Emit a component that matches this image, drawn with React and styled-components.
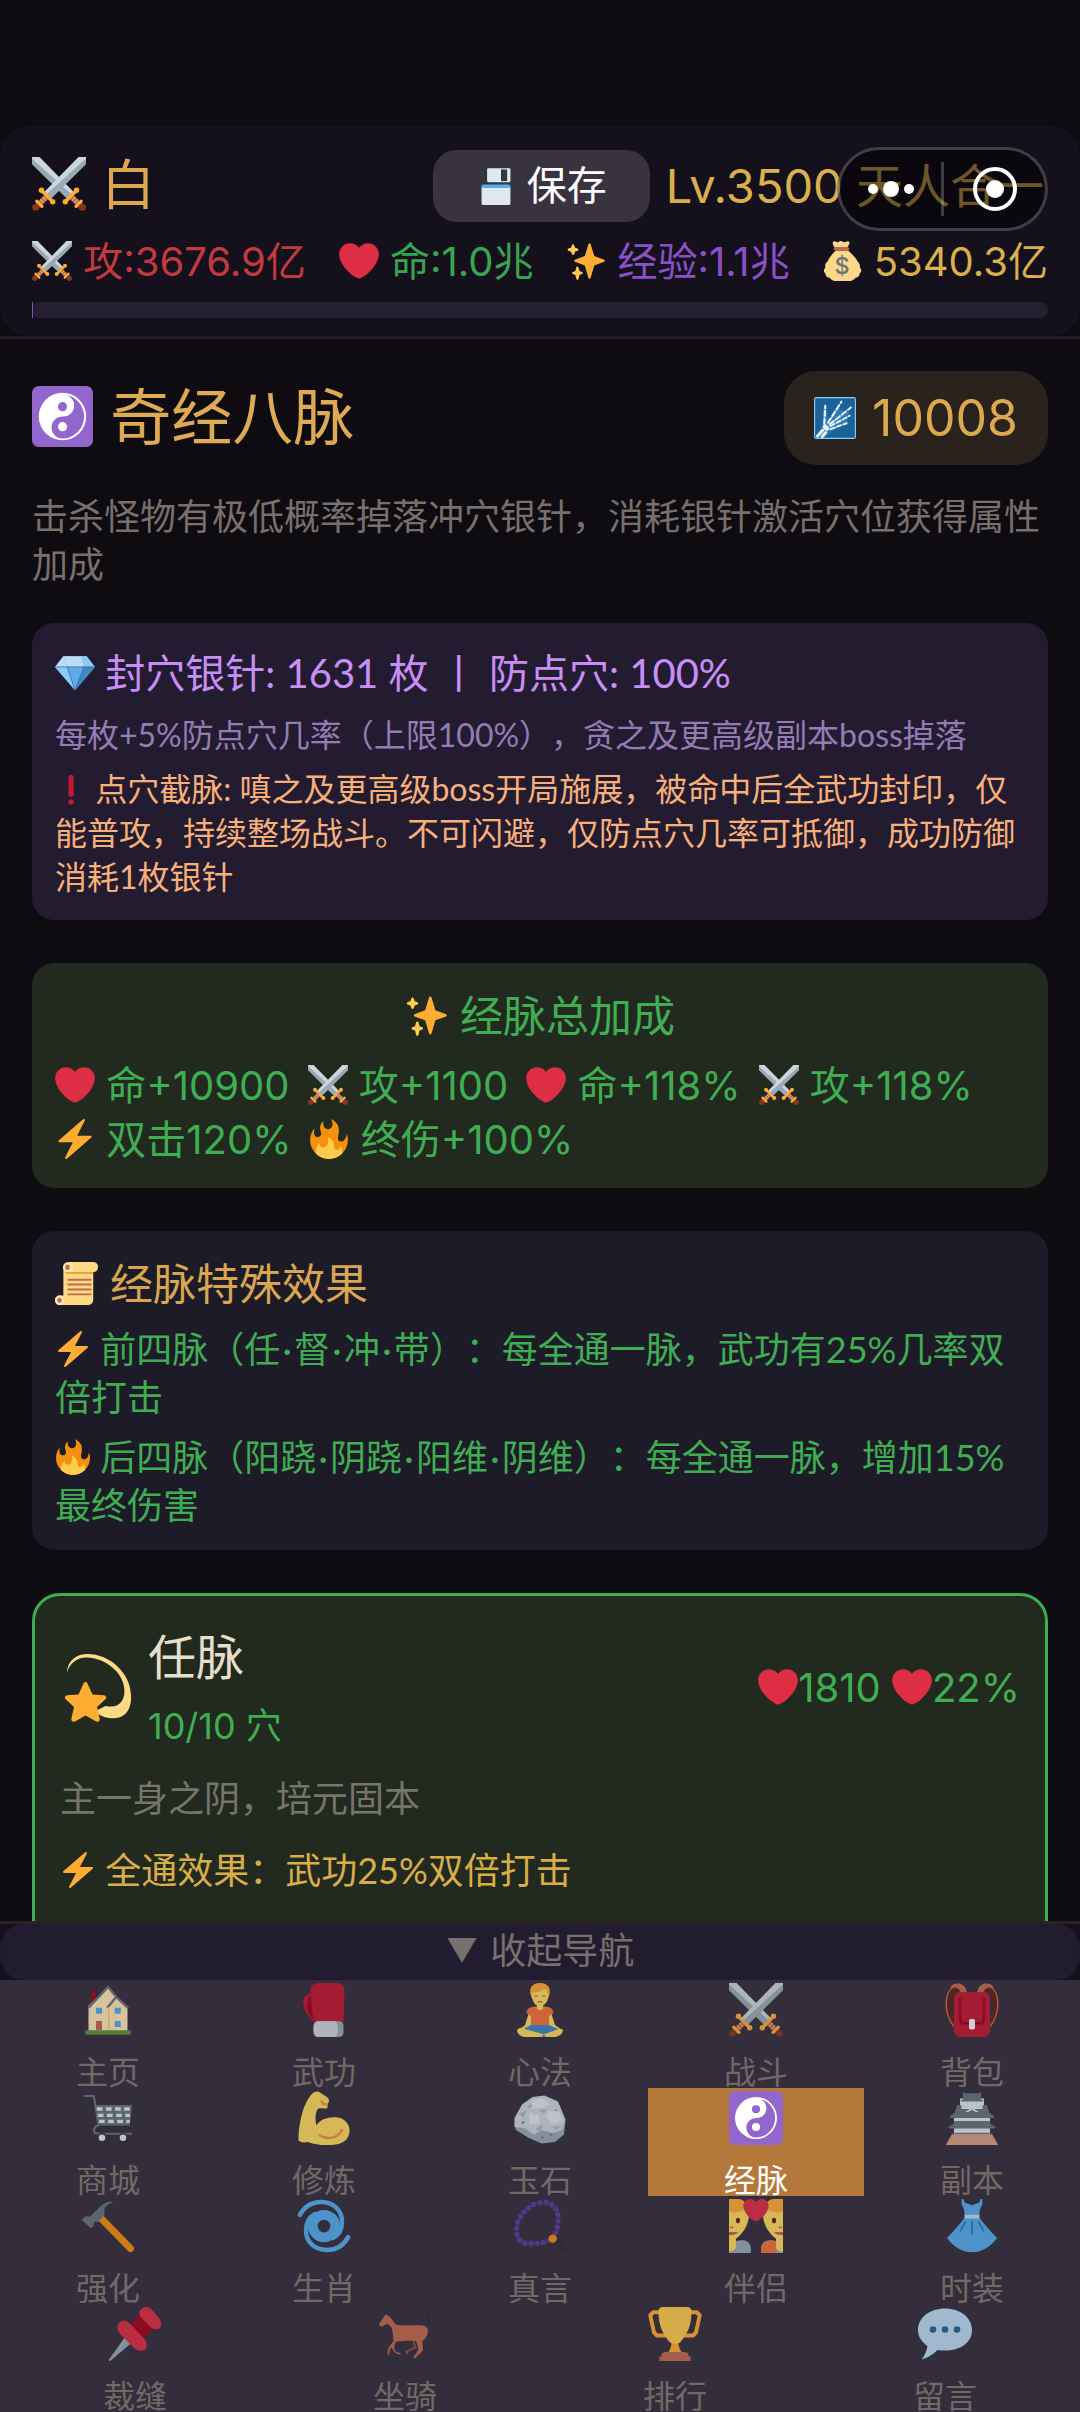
import React from 'react'
import styled, { createGlobalStyle } from 'styled-components'

const GlobalStyle = createGlobalStyle`
    * {
        box-sizing: border-box;
    }
    body {
        margin: 0;
        background: #0e0b11;
        font-family: Inter, "Noto Sans CJK SC", sans-serif;
        font-size: 36px;
        line-height: 48px;
        color: #78706c;
        text-spacing-trim: space-all;
    }
    button {
        border: 0;
        padding: 0;
        background: none;
        font: inherit;
        color: inherit;
        cursor: pointer;
    }
    h1, h2, p {
        margin: 0;
        font-weight: 400;
    }
`

const sword = (
    <g>
        <path fill="#CCD6DD" d="M31 0h5v2.5L10.5 26 8 23.5z" />
        <path fill="#9AAAB4" d="M36 1v3.8L12.5 28l-3-3z" />
        <path stroke="#C1694F" strokeWidth="3.6" d="M10 26.3l-6 6" />
        <path stroke="#D99E82" strokeWidth="1" d="M7 26.6l2.4 2.4M5.4 28.2l2.4 2.4" />
        <path stroke="#FFAC33" strokeWidth="2.2" strokeLinecap="round" d="M6.5 22.5l7 7M3.2 29.5l3.4 3.4" />
        <circle fill="#FFAC33" cx="6.3" cy="22.2" r="1.8" />
        <circle fill="#FFAC33" cx="13.8" cy="29.8" r="1.8" />
        <circle fill="#803820" cx="2.5" cy="33.5" r="2.4" />
    </g>
)

const heartPath = "M35.885 11.833c0-5.45-4.418-9.868-9.867-9.868-3.308 0-6.227 1.633-8.018 4.129-1.791-2.496-4.71-4.129-8.017-4.129-5.45 0-9.868 4.417-9.868 9.868 0 .772.098 1.52.266 2.241C1.751 22.587 11.216 31.568 18 34.034c6.783-2.466 16.249-11.447 17.617-19.959.17-.721.268-1.469.268-2.242z"

const face = (
    <g>
        <path fill="#FFAC33" d="M0 0h7c4 1 7 5 6.500 11-.5 5-3 8-5 9H0z" />
        <path fill="#FFDC5D" d="M0 8c4 2 8 0 11-1 2 2 2.500 6 1 10-1.500 4-5 8-7.500 9.500V32H0z" />
        <path fill="#99AAB5" d="M4.500 28c5-1 9-.5 10 4v4H0v-3z" />
        <path fill="#FFDC5D" d="M0 26h4.600v6c0 2-3 3-4.600 3z" />
        <ellipse fill="#662113" cx="6" cy="14.300" rx="1.400" ry="1.800" />
        <path stroke="#C1694F" strokeWidth=".9" d="M.5 19H3" />
        <path fill="#C1694F" d="M0 22h6c-1 2-4 2-6 2z" />
    </g>
)

// every drawing lives on a 36 x 36 grid
const icons = {
    swords: <>
        <g transform="matrix(-1 0 0 1 36 0)">{sword}</g>
        {sword}
    </>,
    heart: <path fill="#DD2E44" d={heartPath} />,
    zap: <path fill="#FFAC33" d="M32.938 15.651C32.792 15.26 32.418 15 32 15H19.925L26.89 1.458c.219-.426.106-.947-.271-1.243C26.437.071 26.218 0 26 0c-.233 0-.466.082-.653.243L18 6.588 3.347 19.243c-.316.273-.43.714-.284 1.105S3.582 21 4 21h12.075L9.11 34.542c-.219.426-.106.947.271 1.243.182.144.401.215.619.215.233 0 .466-.082.653-.243L18 29.412l14.653-12.655c.317-.273.43-.714.285-1.106z" />,
    fire: <>
        <path fill="#F4900C" d="M35 19c0-2.062-.367-4.039-1.04-5.868-.46 5.389-3.333 8.157-6.335 6.868-2.812-1.208-.917-5.917-.777-8.164.236-3.809-.012-8.169-6.931-11.794 2.875 5.5.333 8.917-2.333 9.125-2.958.231-5.667-2.542-4.667-7.042-3.238 2.386-3.332 6.402-2.333 9 1.042 2.708-.042 4.958-2.583 5.208-2.84.28-4.418-3.041-2.963-8.333C2.52 10.965 1 14.805 1 19c0 9.389 7.611 17 17 17s17-7.611 17-17z" />
        <path fill="#FFCC4D" d="M28.394 23.999c.148 3.084-2.561 4.293-4.019 3.709-2.106-.843-1.541-2.291-2.083-5.291s-2.625-5.083-5.708-6c2.25 6.333-1.247 8.667-3.08 9.084-1.872.426-3.753-.001-3.968-4.007C7.352 23.668 6 26.676 6 30c0 .368.023.73.055 1.09C9.125 34.124 13.342 36 18 36s8.875-1.876 11.945-4.91c.032-.36.055-.722.055-1.09 0-2.187-.584-4.236-1.606-6.001z" />
    </>,
    sparkles: <>
        <path fill="#FFAC33" d="M34.347 16.893l-8.899-3.294-3.323-10.891c-.128-.42-.517-.708-.956-.708-.439 0-.828.288-.956.708l-3.322 10.891-8.9 3.294c-.393.146-.653.519-.653.938 0 .418.26.793.653.938l8.895 3.293 3.324 11.223c.126.424.516.715.959.715.442 0 .833-.291.959-.716l3.324-11.223 8.896-3.293c.391-.144.652-.518.652-.937 0-.418-.261-.792-.653-.938z" />
        <path fill="#FFCC4D" d="M14.472 27.894l-2.314-.856-.9-3.3c-.118-.436-.513-.738-.964-.738-.451 0-.846.302-.965.737l-.9 3.3-2.313.856c-.393.146-.653.52-.653.938 0 .418.26.792.653.938l2.301.853.907 3.622c.112.444.511.756.97.756.459 0 .858-.312.97-.757l.907-3.622 2.301-.853c.393-.144.653-.519.653-.937 0-.418-.26-.793-.653-.937zM10.492 6.843l-2.364-.875-.876-2.365c-.145-.393-.519-.653-.938-.653-.418 0-.792.26-.938.653l-.875 2.365-2.365.875c-.393.146-.653.52-.653.938 0 .418.26.793.653.938l2.365.875.875 2.365c.146.393.52.653.938.653.418 0 .792-.26.938-.653l.875-2.365 2.365-.875c.393-.146.653-.52.653-.938 0-.418-.26-.792-.653-.938z" />
    </>,
    moneybag: <>
        <path fill="#FDD888" d="M12.500 8.500C8 13 6.500 15 5 18.500 3 19.500 2.500 22 3 24c-2 2-1.500 4 0 5 0 3 2.500 4 4 4 1.500 2.500 4 3 6 3h11c2.500 0 5-1 6-3 2 0 4-1.500 4-4 1.500-1 2-3.500 0-5 .5-2.500-.5-4.500-2-5.500-1.500-3.500-4-5.500-8.500-10zM11.500 6C9.500 3 9 1.500 10.500.5c1.500-.8 2 .8 3.500.7 1.200-.1 1.500-1.200 3-1.200s2 1.200 3 1.200c1.500 0 2.500-1.500 4-.7 1.500 1 .5 2.500-1.500 5.500z" />
        <rect fill="#BF6952" x="10.500" y="5.500" width="14" height="3" rx="1.500" />
        <text x="18" y="30" textAnchor="middle" fontSize="21" fontWeight="500" fill="#67757F">$</text>
    </>,
    floppy: <>
        <path fill="#31373D" d="M6 1h24c2 0 4 2 4 4v26c0 2-2 4-4 4H6c-2 0-4-2-4-4V5c0-2 2-4 4-4z" />
        <rect fill="#E1E8ED" x="10" y="3" width="21" height="12.500" rx="1" />
        <rect fill="#31373D" x="22.500" y="4" width="5.500" height="10.500" />
        <path fill="#E1E8ED" d="M5 20h26v14.500c0 .8-.5 1.500-1.500 1.500h-23c-1 0-1.500-.7-1.500-1.500z" />
        <path fill="#55ACEE" d="M6.500 17.500h23c1 0 1.500.7 1.500 1.500v1.800H5V19c0-.8.5-1.500 1.500-1.500z" />
    </>,
    yinyang: <>
        <rect fill="#9266CC" width="36" height="36" rx="4" />
        <circle fill="#FFF" cx="18" cy="18" r="14" />
        <path fill="#9266CC" d="M20 5.200a13 13 0 0 1-2 25.800 6.500 6.500 0 0 1 0-13 6.500 6.500 0 0 0 2-12.800z" />
        <circle fill="#9266CC" cx="18" cy="12.200" r="2.700" />
        <circle fill="#FFF" cx="18" cy="24" r="2.700" />
    </>,
    xray: <>
        <rect fill="#88C9F9" width="36" height="36" rx="2" />
        <rect fill="#1B6299" x="1" y="1" width="34" height="34" rx="1" />
        <path fill="#2F7CB5" d="M7.500 23L8 8l3 1 1 11 9-12 3 4 6 1-1 6-1 4-12 6-7 6H2z" />
        <g stroke="#E8F5FC" strokeLinecap="round" fill="none">
            <path strokeWidth="1.800" strokeDasharray="4.500 2.200" d="M8.800 23L9.700 7.500M12 22L23.500 4M13.500 23.500L31.500 9" />
            <path strokeWidth="1.600" strokeDasharray="4 2" d="M14 25l16.500-9M14 27.500l14-5" />
            <path strokeWidth="4" d="M9.500 25.500l1.500 1.500" />
            <path strokeWidth="2.600" d="M7.500 28.500L3 33.500M10 30.500L7 34" />
        </g>
    </>,
    gem: <>
        <path fill="#5DADEC" d="M0 12.500L18 33.500l18-21L28.500 3h-21z" />
        <path fill="#BDDDF4" d="M0 12.500L7.500 3 11 12.500zM12.500 3H24l3 9.500H11z" />
        <path fill="#8CCAF7" d="M28.500 3L36 12.500H26L23 3zM0 12.500h11l7 21z" />
        <path fill="#BDDDF4" d="M7.500 3h6L11 12.500z" />
        <path fill="#4289C1" d="M26 12.500h10l-18 21z" />
        <path stroke="#376B96" strokeWidth=".7" fill="none" d="M0 12.500h36M11 12.500l7 21 8-21" />
    </>,
    exclamation: <>
        <rect fill="#BE1931" x="15" y="2" width="6" height="25" rx="3" />
        <circle fill="#BE1931" cx="18" cy="32.500" r="3" />
    </>,
    scroll: <>
        <path fill="#FFD983" d="M7 3h25v28c0 3-1.500 5-4 5H4c-2.500 0-4-2-4-4s1.500-4 4-4h3z" />
        <path fill="#FFD983" d="M12 0h20c2.500 0 4 2 4 4.200 0 2.300-1.500 4.300-4 4.300H12z" />
        <path fill="#FFE8B6" d="M3.800 28c2.400 0 3.700 2 3.700 4s-1.300 4-3.700 4S0 34 0 32s1.400-4 3.800-4z" />
        <circle fill="#FFE8B6" cx="11" cy="4.300" r="4.300" />
        <ellipse fill="#C1694F" cx="10.500" cy="4.300" rx="1.900" ry="2.300" />
        <ellipse fill="#C1694F" cx="3.800" cy="32" rx="1.800" ry="2.100" />
        <path stroke="#C1694F" strokeWidth="1.600" d="M10.500 14.800h20M10.500 18.900h20M10.500 23h20M10.500 27.100h20" />
        <path stroke="#E39F3D" strokeWidth="1.500" d="M9 9.200h23" />
    </>,
    dizzy: <>
        <path fill="#FFD983" d="M1.500 10C2 3 7 0 12.500 0 24 0 36 10 35.500 23.500 35.300 31 31 34 26 34c-4 0-8-1.500-9-4l5-2.500c6.500 1.500 10-2 10-8C32 10 22 2 12 1.800 7 1.700 2.700 5 1.500 10z" />
        <path fill="#FFAC33" d="M10.300 15.700c.5-1.100 1.700-1.100 2.200 0l2.600 5.800 6 .4c1.200.1 1.700 1.300.8 2.100l-4.400 4 1.400 6.300c.2 1.200-.9 2-1.900 1.400L11.400 32.500 5.800 35.700c-1 .6-2.100-.2-1.900-1.400L5.300 28 .9 24c-.9-.8-.4-2 .8-2.100l6-.4z" />
    </>,
    house: <>
        <path fill="#A0041E" d="M7 5.500h3V12l-3 3z" />
        <path fill="#FFE8B6" d="M5 15L18 3l6 6.500 7 7V32H5z" />
        <rect fill="#5C913B" x="2.500" y="31.500" width="31" height="3" rx="1.500" />
        <path fill="none" stroke="#66757F" strokeWidth="1.600" d="M5 16.500L18 2.700l6 7M17.500 16.500l6-7.200 8 7.500" />
        <path stroke="#FFCC4D" strokeWidth=".9" d="M18.500 16v15.500" />
        <path fill="#55ACEE" d="M10 16.500h4v4h-4zM22.500 16.500h4v4h-4zM22.500 25.300h4v4h-4z" />
        <path fill="#C1694F" d="M10 25.300h4v6.200h-4z" />
    </>,
    glove: <>
        <path fill="#BE1931" d="M10 6.500c-4 .5-6 3-6 6.500 0 5 4 9.500 7.500 13.500H17V8z" />
        <path fill="#BE1931" d="M9 5.500C9 2 11 0 14.500 0h12c3.500 0 5.300 2 5.200 5.500L31 26.500H12.500C10 20 9 12 9 5.500z" />
        <path fill="#A0041E" d="M8.800 8c2 5 .3 10.500 3.200 18-2.500-3-6-8-5.500-11.500.3-2 .8-4 2.300-6.500z" />
        <rect fill="#99AAB5" x="11" y="25.500" width="20" height="10.500" rx="3" />
        <path fill="#CCD6DD" d="M14 25.500h11c3 0 3 10.500 0 10.500H14c-4 0-4-10.500 0-10.500z" />
    </>,
    lotus: <>
        <path fill="#FFDC5D" d="M11.500 17L8 28l-5 4 4 3 6-5 2-8zM24.500 17L28 28l5 3.500-4 3-7-4-2-9z" />
        <path fill="#F4743B" d="M13 16c2-1 8-1 10 0 3 .5 4 2 4 4l-3 2v7H12v-7l-3-2c0-2 1-3.500 4-4z" />
        <path fill="#3B88C3" d="M12 28h12l7 3c-1 3-5 4-8 4H11c-3 0-5-1-6-3.500z" />
        <path fill="#FFDC5D" d="M3 31c2-2 4-1 6 0l11 3c2 1 1 2-2 2H8c-3 0-6-3-5-5zM33 31c-2-1-4 0-6 1l-6 2c-2 1-1 2 2 2h4c4 0 7-3 6-5z" />
        <path fill="#FFAC33" d="M18 0c5 0 7 3 6.500 7-.4 3-2 4-3 5h-7c-1-1-2.500-2-3-5C11 3 13 0 18 0z" />
        <path fill="#FFDC5D" d="M12.500 6c3 1 6 0 8-2 2 0 3.500 3 3 5.500-.5 3-2 4.500-3.500 5.500v2c-1 1.500-3 1.500-4 0v-2c-2-1-3.500-3.500-3.500-9z" />
        <path stroke="#C1694F" strokeWidth=".9" fill="none" d="M14.500 8.700h2M19.500 8.700h2M16.500 12.500h3" />
    </>,
    backpack: <>
        <path fill="none" stroke="#662113" strokeWidth="3.500" d="M8 3C1 7 0 18 6 27M28 3c7 4 8 15 2 24" />
        <path fill="none" stroke="#C1694F" strokeWidth="1" d="M6 2C-1 7-1 20 6 29M30 2c7 5 7 18 0 27" />
        <path fill="#C1694F" d="M4 2c2-2.500 8-2.500 10 2l1 3h-4C9 3 7 2 4 4zM32 2c-2-2.500-8-2.500-10 2l-1 3h4c2-4 4-5 7-3z" />
        <rect fill="#BE1931" x="6" y="6" width="24" height="30" rx="4" />
        <path fill="none" stroke="#A0041E" strokeWidth="1.600" d="M10 10v14c0 2 1 3 3 3h10c2 0 3-1 3-3V10" />
        <rect fill="#F5F8FA" x="16" y="24" width="4" height="7" rx="1.200" />
    </>,
    cart: <>
        <path fill="#66757F" d="M9 9.300h25L32.500 23H11z" />
        <path fill="none" stroke="#66757F" strokeWidth="1.400" d="M2 3.300h6.500L12 22.500c-5 2-4 6 0 6h22" />
        <path stroke="#E1E8ED" strokeWidth="2.200" strokeDasharray="3.800 2.300" d="M10.500 12h22.500M11.200 16.200h21.500M12 20.300h20.500" />
        <circle fill="#292F33" cx="14" cy="31.200" r="3.200" />
        <circle fill="#292F33" cx="28" cy="31.200" r="3.200" />
        <circle fill="#E1E8ED" cx="14" cy="31.200" r="2.200" />
        <circle fill="#E1E8ED" cx="28" cy="31.200" r="2.200" />
    </>,
    muscle: <>
        <path fill="#FFDC5D" d="M1 33C1 22 4 8 10 2c2-2 4-2 5.500-.8L20 4c2 1.500 1.500 4 0 5l.5 2c-1.500 1.500-5 0-6.500.8-2 3-2 7-1 11C15 19 21 17 26 17.500c6 .5 9.500 5 9 9.500-.5 5-4 8-9 8.700-7 .8-14 .3-19-1.700-2 .5-4 .5-6-1z" />
        <path fill="none" stroke="#EF9645" strokeWidth="1.700" strokeLinecap="round" d="M15 29.500c6 3.500 12 2 15-3.500M16.500 7c0 2 2 2 3.500 2" />
    </>,
    rock: <>
        <path fill="#99AAB5" d="M1 22L6 10l7-5 8-1 9 4 5 12-1 9-6 5-9 1-9-4-8-5z" />
        <path fill="#CCD6DD" d="M1 18L6 9l7-5 8-1 9 4 5 12-2 7-7 2-7-2-5 3-6-4-7-1z" />
        <path fill="#E1E8ED" d="M13 6l7-1 5 4-5 2-7 1zM24 13l7 1 2 6-7 2-4-5zM11 15l6 1 1 5-7 2z" />
        <path fill="#AAB8C2" d="M4 15l5-2-2 5zM9 10l4-1-2 3zM17 13l5-1-1 3zM15 25l5-3-2 6zM26 24l6-1-3 3z" />
        <path fill="#66757F" d="M6 20l2 1-2 1zM24 28l3 1-2 1zM19 30l2 1-2 1zM28 12l2 1-2 0z" />
    </>,
    castle: <>
        <path fill="#E1E8ED" d="M10 5h16v7H10zM6 16h24v14H6z" />
        <path fill="#66757F" d="M12 .5h1v1h10v-1h1V6h1.500v1h-15V6H12zM8 9.500h3V12h14V9.500h3l1.500 5 3.500 2.500-1 1H4l-1-1 3.500-2.500zM6.500 20h23l1 2 3.500 2.300-1 .7H3l-1-.7L5.500 22zM5 27.800h26V29H5z" />
        <path fill="#E1E8ED" d="M18 11l4.500 3h-2L18 12.500 15.500 14h-2z" />
        <path fill="#D99E82" d="M4.500 29h27l4 7H.5z" />
    </>,
    hammer: <>
        <path stroke="#F4900C" strokeWidth="4.600" strokeLinecap="round" d="M13 12.500l20 20.500" />
        <path fill="#66757F" d="M.5 14L3 11.500l3 .3L12 6c4-4.500 8-4.500 10-3.800-4 .8-6.500 3-6.500 5.800v3l-4.500 4.500-2-.5-1 3.500-1.500 1z" />
    </>,
    cyclone: <>
        <circle fill="none" stroke="#55ACEE" strokeWidth="6.500" cx="18" cy="18" r="7.500" />
        <g fill="none" stroke="#55ACEE" strokeWidth="3" strokeLinecap="round">
            <path d="M1.900 10.600C5 5 10 2 16 2c8.500 0 14 5.500 14 13 0 5-2 9-6 11" />
            <path d="M34.100 25.400C31 31 26 34 20 34 11.500 34 6 28.500 6 21c0-5 2-9 6-11" />
        </g>
    </>,
    beads: <>
        <path fill="none" stroke="#5C3AA0" strokeWidth="3.600" strokeLinecap="round" strokeDasharray=".1 4" d="M26.500 26.400C29 22 30.500 17 30 11c-.8-6-5-9-11-8.800C11 3 3 11 2.300 19.500c-.3 6 2.500 10 7.700 10.300 7 .4 12-1 16.500-3.400" />
        <path stroke="#292F33" strokeWidth="3.400" d="M28 27.500l6 7" />
        <circle fill="#F4900C" cx="26.500" cy="26.400" r="2.800" />
    </>,
    couple: <>
        {face}
        <g transform="matrix(-1 0 0 1 36 0)">{face}</g>
        <path fill="#F4743B" d="M21.500 36v-4c.6-3 3.500-4.500 7-4.500l3 1V36z" />
        <path fill="#FFDC5D" d="M36 26h-4.600v6c0 2 3 3 4.600 3z" />
        <g transform="translate(9.500 -1) scale(.47)"><path fill="#DD2E44" d={heartPath} /></g>
    </>,
    dress: <>
        <path fill="#55ACEE" d="M11 0h1.300l1 2.500c1.500.5 3 .8 4.700 1.700 1.700-.9 3.200-1.200 4.700-1.700l1-2.500H25l-.2 4c-1.300 2-2 4-1.800 7H13c.2-3-.5-5-1.800-7z" />
        <path fill="#55ACEE" d="M13 12.500h10c3 4 7 9 11.700 13.500C30 32.500 24 35.500 18 35.500S6 32.500 1.300 26C6 21.500 10 16.500 13 12.500z" />
        <rect fill="#BDDDF4" x="13" y="10.500" width="10" height="2.500" />
        <path stroke="#2F7DB8" strokeWidth="1.300" strokeLinecap="round" d="M18 15v8M13.500 15.500L10.500 21M22.500 15.500l3 5.500" />
    </>,
    pushpin: <>
        <path fill="#99AAB5" d="M11 20.500l4 4L1.500 36 .3 35.500z" />
        <path fill="#A0041E" d="M15 12l6-7 10 9-7 7z" />
        <path fill="#DD2E44" d="M7.500 10.500c2.500-2.500 6-1 8 1.500l8.500 9c2 2.500 2.500 5 1 7-2.500 2-5.500 1.500-8.500-1.500L9 19c-3-3-3.500-6-1.500-8.500zM22 1.500c2.500-2.500 5.500-1.500 8 1l4 5c2 2.500 2 5 .5 6.500-2 1.800-5 .8-7-1.500l-4.500-4.500c-2-2-3-4.500-1-6.500z" />
    </>,
    horse: <>
        <path fill="none" stroke="#292F33" strokeWidth="2" d="M33 11c2-1 .5-4-.5-7" />
        <path fill="#C1694F" d="M5 5l1.500.8c2 .5 3.500 4 5.500 5.800 2 1 12 .5 17 .5 4 .5 5 3 4 6-.6 2-2 3.500-3.500 4.500L30 28c-.5 3-4 4-5.500 6.500l-1-1 3.500-5-1.500-5.500c-4-1-8 0-13 0-2 1-2 5-.5 7l3 .7v1c-3 .3-5-2.500-6-5-.8 1-1.500 3-1.500 5H6.300c0-4 1.500-6 4.200-9C10 20 10 15 8.500 13L6 11l-3.500 2.300L.5 11.500z" />
        <path fill="none" stroke="#A3533C" strokeWidth="1.200" d="M23.500 23l1.500 4-6 2.500.5 2" />
    </>,
    trophy: <>
        <path fill="none" stroke="#FFAC33" strokeWidth="2.600" strokeLinejoin="round" d="M9 3.500H3.500l-2 2L4 17l2 2h6M27 3.500h5.500l2 2L32 17l-2 2h-6" />
        <path fill="#FFAC33" d="M16 22h4c.3 4 1 6 3 9H13c2-3 2.700-5 3-9z" />
        <path fill="#FFCC4D" d="M10 0h16c2 0 3 1 3 3 0 10-3 15-7.500 20.500-1.500 1.500-5.500 1.500-7 0C10 18 7 13 7 3c0-2 1-3 3-3z" />
        <path fill="#C1694F" d="M11 30h14l2 1v2h1.500v3h-21v-3H9v-2z" />
    </>,
    speech: <>
        <path fill="#BDDDF4" d="M18 1c10 0 18 6 18 14.500S28 29 18 29c-1.500 0-3.500-.1-5-.4C10 31.500 6.500 34 2.500 35c2-3 3.500-6 3.800-9C2.500 23.500 0 19.500 0 15.500 0 7 8 1 18 1z" />
        <circle fill="#226699" cx="10" cy="15" r="2.200" />
        <circle fill="#226699" cx="18" cy="15" r="2.200" />
        <circle fill="#226699" cx="26" cy="15" r="2.200" />
    </>
};

const Glyph = styled.svg`
    width: 1em;
    height: 1em;
    flex: none;
    vertical-align: -0.12em;
    overflow: visible;
`

function Emoji({name}){
    return <Glyph viewBox="0 0 36 36" aria-hidden="true">{icons[name]}</Glyph>;
}

const stats = [
    {icon: "swords", text: "攻:3676.9亿", color: "#c23a40"},
    {icon: "heart", text: "命:1.0兆", color: "#36a650"},
    {icon: "sparkles", text: "经验:1.1兆", color: "#8b50c8"},
    {icon: "moneybag", text: "5340.3亿", color: "#dbb04a"}
];

const bonuses = [
    {icon: "heart", text: "命+10900"},
    {icon: "swords", text: "攻+1100"},
    {icon: "heart", text: "命+118%"},
    {icon: "swords", text: "攻+118%"},
    {icon: "zap", text: "双击120%"},
    {icon: "fire", text: "终伤+100%"}
];

// meridian names are joined by a dot with a hair space on each side
const joinNames = (names) => names.join("\u200a·\u200a");

const effects = [
    {icon: "zap", text: `前四脉（${joinNames(["任", "督", "冲", "带"])}）：每全通一脉，武功有25%几率双倍打击`},
    {icon: "fire", text: `后四脉（${joinNames(["阳跷", "阴跷", "阳维", "阴维"])}）：每全通一脉，增加15%最终伤害`}
];

const navItems = [
    {icon: "house", name: "主页"},
    {icon: "glove", name: "武功"},
    {icon: "lotus", name: "心法"},
    {icon: "swords", name: "战斗"},
    {icon: "backpack", name: "背包"},
    {icon: "cart", name: "商城"},
    {icon: "muscle", name: "修炼"},
    {icon: "rock", name: "玉石"},
    {icon: "yinyang", name: "经脉"},
    {icon: "castle", name: "副本"},
    {icon: "hammer", name: "强化"},
    {icon: "cyclone", name: "生肖"},
    {icon: "beads", name: "真言"},
    {icon: "couple", name: "伴侣"},
    {icon: "dress", name: "时装"},
    {icon: "pushpin", name: "裁缝"},
    {icon: "horse", name: "坐骑"},
    {icon: "trophy", name: "排行"},
    {icon: "speech", name: "留言"}
];

export default function App(){
    const renderStat = (stat) => (
        <Stat key={stat.text} $color={stat.color}><Emoji name={stat.icon}/> {stat.text}</Stat>
    );

    const renderNavItem = (item) => {
        const active = item.name === "经脉";
        return (
            <NavButton key={item.name} type="button" $active={active} aria-current={active ? "page" : undefined}>
                <NavIcon $active={active}><Emoji name={item.icon}/></NavIcon>
                {item.name}
            </NavButton>
        );
    };

    return (
        <Page>
            <GlobalStyle/>
            <HeaderLine>
                <Header>
                    <Row>
                        <Name><Emoji name="swords"/> 白</Name>
                        <HeaderRight>
                            <SaveButton type="button"><Emoji name="floppy"/> 保存</SaveButton>
                            <Level>Lv.3500 天人合一</Level>
                        </HeaderRight>
                    </Row>
                    <Stats>{stats.map(renderStat)}</Stats>
                    <Progress><ProgressFill style={{width: "0.1%"}}/></Progress>
                </Header>
            </HeaderLine>

            <Capsule>
                <CapsuleButton type="button" aria-label="更多">
                    <svg width="52" height="24" viewBox="0 0 52 24" fill="#fff">
                        <circle cx="8" cy="12" r="5"/>
                        <circle cx="26" cy="12" r="8"/>
                        <circle cx="44" cy="12" r="5"/>
                    </svg>
                </CapsuleButton>
                <CapsuleButton type="button" aria-label="关闭">
                    <svg width="44" height="44" viewBox="0 0 44 44">
                        <circle cx="22" cy="22" r="20" fill="none" stroke="#fff" strokeWidth="4"/>
                        <circle cx="22" cy="22" r="9" fill="#fff"/>
                    </svg>
                </CapsuleButton>
            </Capsule>

            <Main>
                <Row>
                    <Title><Emoji name="yinyang"/> 奇经八脉</Title>
                    <NeedleCount><CountIcon><Emoji name="xray"/></CountIcon>10008</NeedleCount>
                </Row>
                <Intro>击杀怪物有极低概率掉落冲穴银针，消耗银针激活穴位获得属性加成</Intro>

                <Card $bg="#231b30">
                    <SealTitle as="h2"><Emoji name="gem"/> 封穴银针: 1631 枚 丨 防点穴: 100%</SealTitle>
                    <SealNote>每枚+5%防点穴几率（上限100%），贪之及更高级副本boss掉落</SealNote>
                    <SealWarning><Emoji name="exclamation"/> 点穴截脉: 嗔之及更高级boss开局施展，被命中后全武功封印，仅能普攻，持续整场战斗。不可闪避，仅防点穴几率可抵御，成功防御消耗1枚银针</SealWarning>
                </Card>

                <Card $bg="#222a20">
                    <CardTitle $color="#3fae52" $center><Emoji name="sparkles"/> 经脉总加成</CardTitle>
                    <BonusList>
                        {bonuses.map((bonus) => <span key={bonus.text}><Emoji name={bonus.icon}/> {bonus.text}</span>)}
                    </BonusList>
                </Card>

                <Card $bg="#1e1b28">
                    <CardTitle $color="#d8a650"><Emoji name="scroll"/> 经脉特殊效果</CardTitle>
                    {effects.map((effect) => <Effect key={effect.icon}><Emoji name={effect.icon}/> {effect.text}</Effect>)}
                </Card>

                <Meridian>
                    <Row>
                        <MeridianHead>
                            <BigIcon><Emoji name="dizzy"/></BigIcon>
                            <div>
                                <MeridianName>任脉</MeridianName>
                                <Points>10/10 穴</Points>
                            </div>
                        </MeridianHead>
                        <MeridianBonus><Emoji name="heart"/>1810 <Emoji name="heart"/>22%</MeridianBonus>
                    </Row>
                    <MeridianText>主一身之阴，培元固本</MeridianText>
                    <MeridianText $color="#d9ae48"><Emoji name="zap"/> 全通效果：武功25%双倍打击</MeridianText>
                </Meridian>
            </Main>

            <Footer>
                <Toggle type="button"><Arrow>▼</Arrow>收起导航</Toggle>
                <Nav>{navItems.map(renderNavItem)}</Nav>
            </Footer>
        </Page>
    );
};

/* running text, its latin is a little narrower than in the headings */
const Copy = styled.p`
    font-family: Lato, "Noto Sans CJK SC", sans-serif;
`
const Page = styled.div`
    display: flex;
    flex-direction: column;
    height: 100vh;
    padding-top: 126px;
    position: relative;
`
const HeaderLine = styled.div`
    flex: none;
    border-bottom: 3px solid #261e20;
`
const Header = styled.header`
    padding: 24px 32px 18px;
    background: #14101c;
    border-radius: 28px;
`
const Row = styled.div`
    display: flex;
    align-items: center;
    justify-content: space-between;
`
const Name = styled.div`
    font-size: 54px;
    line-height: 72px;
    color: #dba850;
`
const HeaderRight = styled.div`
    display: flex;
    align-items: center;
    gap: 16px;
    padding-right: 4px;
`
const SaveButton = styled.button`
    padding: 0 43px;
    font-size: 40px;
    line-height: 72px;
    color: #fff;
    background: #393340;
    border-radius: 24px;
`
const Level = styled.div`
    font-size: 47px;
    line-height: 72px;
    color: #dbb04a;
    white-space: nowrap;
`
const Stats = styled.div`
    display: flex;
    justify-content: space-between;
    margin: 14px 0;
`
const Stat = styled.span`
    font-size: 40px;
    line-height: 52px;
    color: ${props => props.$color};
    white-space: nowrap;
`
const Progress = styled.div`
    height: 16px;
    background: #241f31;
    border-radius: 8px;
`
const ProgressFill = styled.div`
    height: 16px;
    background: #8b50c8;
`
/* floats over the header, like the host app's own controls */
const Capsule = styled.div`
    position: absolute;
    top: 147px;
    right: 32px;
    width: 211px;
    height: 84px;
    display: flex;
    align-items: center;
    border: 3px solid rgba(255, 255, 255, 0.22);
    border-radius: 42px;
    background: rgba(0, 0, 0, 0.5);
`
const CapsuleButton = styled.button`
    flex: 1;
    height: 54px;
    display: flex;
    align-items: center;
    justify-content: center;
    & + & {
        border-left: 3px solid rgba(255, 255, 255, 0.22);
    }
`
const Main = styled.main`
    flex: 1;
    min-height: 0;
    overflow-y: auto;
    scrollbar-width: none;
    padding: 32px 32px 0;
`
const Title = styled.h1`
    font-size: 61px;
    line-height: 94px;
    color: #dfaa54;
`
const NeedleCount = styled.div`
    display: flex;
    align-items: center;
    gap: 16px;
    padding: 0 30px;
    font-size: 50px;
    line-height: 94px;
    color: #dba850;
    background: #2a221c;
    border-radius: 32px;
`
const CountIcon = styled.span`
    display: flex;
    font-size: 42px;
`
const Intro = styled.p`
    margin-top: 28px;
`
const Card = styled.section`
    margin-top: 43px;
    padding: 24px 23px 21px;
    background: ${props => props.$bg};
    border-radius: 22px;
    ${Intro} + & {
        margin-top: 34px;
    }
`
const SealTitle = styled(Copy)`
    font-size: 40px;
    line-height: 52px;
    color: #c78ff5;
`
const SealNote = styled(Copy)`
    margin-top: 14px;
    font-size: 32px;
    line-height: 44px;
    color: #957bb4;
`
const SealWarning = styled(Copy)`
    margin-top: 10px;
    font-size: 32px;
    line-height: 44px;
    color: #f7b07a;
`
const CardTitle = styled.h2`
    font-size: 43px;
    line-height: 58px;
    color: ${props => props.$color};
    text-align: ${props => props.$center ? "center" : "left"};
`
const BonusList = styled.div`
    display: flex;
    flex-wrap: wrap;
    column-gap: 18px;
    margin-top: 14px;
    font-size: 40px;
    line-height: 54px;
    color: #3fae52;
`
const Effect = styled(Copy)`
    margin-top: 12px;
    color: #3fae52;
`
const Meridian = styled.section`
    margin-top: 43px;
    padding: 30px 25px 60px;
    background: #222a20;
    border: 3px solid #3fae52;
    border-radius: 28px;
`
const MeridianHead = styled.div`
    display: flex;
    align-items: center;
    gap: 12px;
`
const BigIcon = styled.span`
    display: flex;
    padding: 0 4px;
    font-size: 68px;
`
const MeridianName = styled.h2`
    font-size: 48px;
    line-height: 64px;
    color: #e8dfcb;
`
const Points = styled.p`
    margin-top: 12px;
    color: #3fae52;
`
const MeridianBonus = styled.div`
    font-size: 40px;
    color: #3fae52;
`
const MeridianText = styled(Copy)`
    margin-top: 24px;
    color: ${props => props.$color || "#77746a"};
`
const Footer = styled.footer`
    flex: none;
    display: flex;
    flex-direction: column;
    border-top: 3px solid #2a2426;
    background: #14101c;
`
const Toggle = styled.button`
    display: flex;
    justify-content: center;
    gap: 12px;
    padding-bottom: 2px;
    line-height: 54px;
    background: #221c30;
    border-radius: 24px;
`
const Arrow = styled.span`
    font-size: 32px;
`
const Nav = styled.nav`
    display: flex;
    flex-wrap: wrap;
    background: #332d3c;
`
const NavButton = styled.button`
    flex: 1 0 20%;
    height: 108px;
    padding-top: 3px;
    display: flex;
    flex-direction: column;
    align-items: center;
    justify-content: space-between;
    font-size: 32px;
    line-height: 30px;
    color: ${props => props.$active ? "#fff" : "#736964"};
    background: ${props => props.$active ? "#b4783b" : "none"};
`
const NavIcon = styled.span`
    display: flex;
    font-size: 54px;
    opacity: ${props => props.$active ? 1 : 0.8};
`
